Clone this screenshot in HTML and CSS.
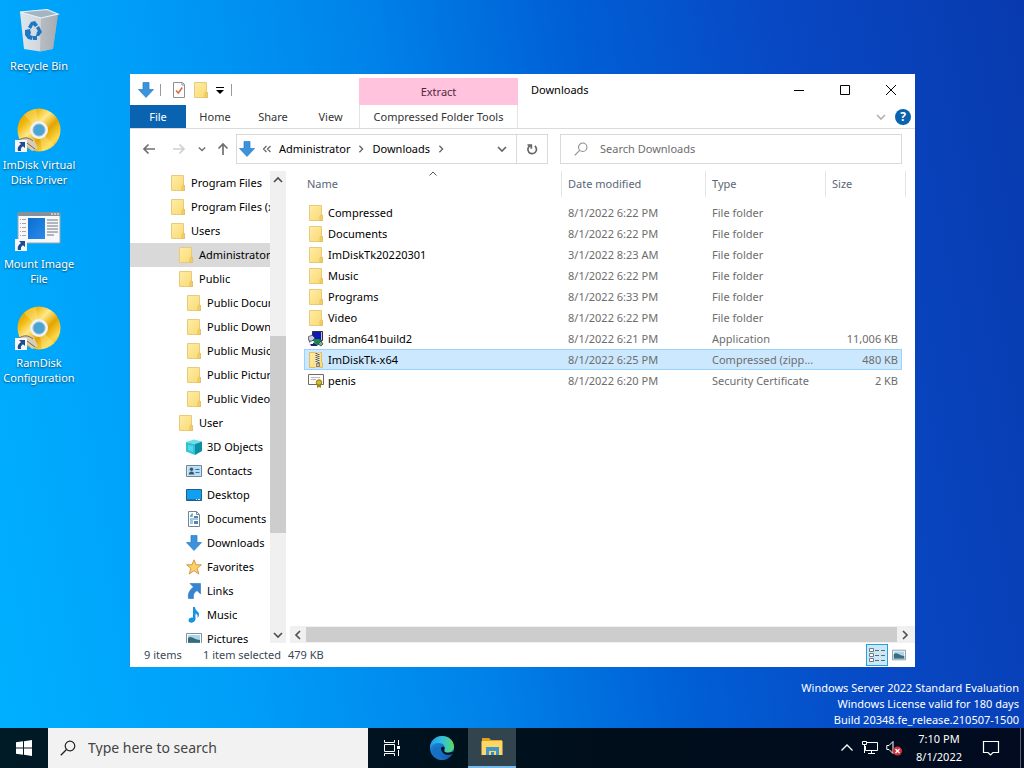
FILE: index.html
```html
<!DOCTYPE html>
<html lang="en">
<head>
<meta charset="utf-8">
<title>Downloads</title>
<meta name="viewport" content="width=device-width, initial-scale=1">
<link rel="stylesheet" href="styles.css">
</head>
<body>
<svg class="defs" aria-hidden="true">
  <defs>
    <linearGradient id="gFolder" x1="0" y1="0" x2="1" y2="1"><stop offset="0" stop-color="#ffeda6"/><stop offset="1" stop-color="#f9d872"/></linearGradient>
    <linearGradient id="gGold" x1="0" y1="0" x2="1" y2="1"><stop offset="0" stop-color="#c98f00"/><stop offset=".25" stop-color="#f2b90e"/><stop offset=".42" stop-color="#ffe98a"/><stop offset=".6" stop-color="#e3a400"/><stop offset=".8" stop-color="#ffd94a"/><stop offset="1" stop-color="#b98300"/></linearGradient>
    <linearGradient id="gBin" x1="0" y1="0" x2="1" y2="0"><stop offset="0" stop-color="#dfe6ec"/><stop offset=".6" stop-color="#cdd4da"/><stop offset="1" stop-color="#a2a7ae"/></linearGradient>
    <linearGradient id="gScreen" x1="0" y1="0" x2="1" y2="1"><stop offset="0" stop-color="#0a6fd0"/><stop offset="1" stop-color="#2b8ae8"/></linearGradient>
    <linearGradient id="gEdgeA" x1="0" y1="0" x2="1" y2="0"><stop offset="0" stop-color="#1f9fe6"/><stop offset=".55" stop-color="#35c1d8"/><stop offset="1" stop-color="#5fd95c"/></linearGradient>
    <linearGradient id="gEdgeB" x1="0" y1="0" x2="1" y2="1"><stop offset="0" stop-color="#1b8fe0"/><stop offset="1" stop-color="#0f56ae"/></linearGradient>
  </defs>
  <symbol id="folder" viewBox="0 0 16 16">
    <path d="M1.5.5h12v9l1 1v5h-13z" fill="url(#gFolder)" stroke="#e8cb78"/>
    <path d="M12 15.5v-4l1.5-2 1 1.500v4.500z" fill="#f4cf63" stroke="#dfbc5c" stroke-width=".7"/>
  </symbol>
  <symbol id="zip" viewBox="0 0 16 16">
    <path d="M1.500.5h12v9l1 1v5h-13z" fill="url(#gFolder)" stroke="#e0bd60"/>
    <path d="M7 .5h5v15H7z" fill="#efe5bd"/>
    <path d="M8.500 1v10M10.500 2v10" stroke="#5c5c54" stroke-width="2" stroke-dasharray="1 1"/>
    <path d="M8 11h4v4H8z" fill="#8b8772"/><path d="M9.500 12h1v2h-1z" fill="#eee"/>
  </symbol>
  <symbol id="down" viewBox="0 0 16 16"><path d="M5 .5h6v7h4.500L8 15.500.5 7.500H5z" fill="#3a93dc" stroke="#2a7cc2" stroke-width=".7"/></symbol>
  <symbol id="cube" viewBox="0 0 16 16"><path d="M0 3 8 .5l8 2L9 5z" fill="#6be0ea"/><path d="M0 3l9 2v11L0 12.500z" fill="#2fc3d4"/><path d="M9 5l7-2.500V12l-7 4z" fill="#0c8ea6"/><path d="M2 6l5 1v6l-5-2z" fill="#58d8e4"/></symbol>
  <symbol id="contacts" viewBox="0 0 16 16"><path d="M.5 2.500h15v11H.5z" fill="#d5ecfa" stroke="#6d8798"/><path d="M2 3.500h12.500v9H2z" fill="#b5dcf5"/><circle cx="5.500" cy="6.200" r="1.700" fill="#3d5468"/><path d="M2.800 11.500c0-4 5.400-4 5.400 0z" fill="#3d5468"/><path d="M9.500 6.500h4M9.500 9.500h4" stroke="#2676b0"/></symbol>
  <symbol id="desktop" viewBox="0 0 16 16"><path d="M.5 2.500h15v11H.5z" fill="#10a0f0" stroke="#235f8c"/><path d="M1 12h14v1H1z" fill="#1874b8"/><path d="M10 12.500h1m1 0h2" stroke="#d5efff"/></symbol>
  <symbol id="document" viewBox="0 0 16 16"><path d="M2.500.5h8l3 3v12h-11z" fill="#fff" stroke="#738697"/><path d="M10.500.5v3h3" fill="none" stroke="#738697"/><path d="M4 5h3M4 8h8M4 10h3M4 12h3" stroke="#3d8fb8"/><path d="M6 2l-2 4 2-1 1-2z" fill="#3fa0a0"/><path d="M8 5h4v2H8zM8 10h4v3H8z" fill="#5682b0"/></symbol>
  <symbol id="star" viewBox="0 0 16 16"><path d="M8 .8l2 5h5.400l-4.300 3.500 1.700 5.700L8 11.700 3.200 15l1.700-5.700L.6 5.800H6z" fill="#ffd06a" stroke="#d39a45"/></symbol>
  <symbol id="links" viewBox="0 0 16 16"><path d="M4 .5h10.500V11L11 7.500c-3 2-4 4-3.500 8H2.500c-1-5 1.500-9 5-11.500z" fill="#3684d2" stroke="#2b73bc" stroke-width=".6"/></symbol>
  <symbol id="music" viewBox="0 0 16 16"><path d="M7 0h2c0 4 4 4 4 7.500 0 1.500-.5 2.500-1.500 3.500.5-3-.5-4-2-4.500V12c0 4-7 5-7 1.500C2.500 11 5 10 7 10.500z" fill="#1a93df"/></symbol>
  <symbol id="picture" viewBox="0 0 16 16"><path d="M.5 2.500h15v11H.5z" fill="#fff" stroke="#82919b"/><path d="M2 4h12v8H2z" fill="#a8d7ed"/><path d="M2 7c4-3 6 2 12 2v3H2z" fill="#3a6a75"/><path d="M2 11h12v1H2z" fill="#3f80af"/></symbol>
  <symbol id="installer" viewBox="0 0 16 16"><path d="M4.500.5h10v9h-10z" fill="#1018b8" stroke="#333"/><path d="M13.500 1v8" stroke="#bcbccc"/><path d="M0 6l4-2 3 3-3 3H1z" fill="#c8cbe8" stroke="#333" stroke-width=".7"/><path d="M5 8h6l3 2v3l-3 1H7z" fill="#158a4c"/><path d="M1 10l5 2 4 3H3z" fill="#20206c"/><path d="M2 11h3v2H2z" fill="#fff"/><path d="M10 13l3-3 2 3-2 2z" fill="#80b090" stroke="#333" stroke-width=".7"/></symbol>
  <symbol id="cert" viewBox="0 0 16 16"><path d="M.5 1.500h15v10H.5z" fill="#fffdf3" stroke="#6c6c63"/><path d="M3 4.500h9M3 6.500h5" stroke="#b9b9d5"/><path d="M9 10h4v5l-2-1-2 1z" fill="#a88b15"/><circle cx="11" cy="9.500" r="2.700" fill="#d6bb32" stroke="#8b7616"/></symbol>
  <symbol id="details" viewBox="0 0 16 16"><path d="M.5 1.500h4v3h-4zM.5 6.500h4v3h-4zM.5 11.500h4v3h-4z" fill="#fff" stroke="#6d7b85"/><path d="M6 3.500h4m2 0h4M6 8.500h4m2 0h4M6 13.500h4m2 0h4" stroke="#5b6b76"/></symbol>
  <symbol id="check" viewBox="0 0 16 16"><path d="M2.500.5h9l2 2v13h-11z" fill="#fff" stroke="#8f8f8f"/><path d="M11 .5v2.500h2.500" fill="none" stroke="#8f8f8f"/><path d="M5 8.500l2.300 2.500 4-5.500" fill="none" stroke="#e06a45" stroke-width="1.600"/></symbol>
  <symbol id="chevDown" viewBox="0 0 10 10"><path d="M1 3l4 4 4-4" fill="none" stroke="currentColor" stroke-width="1.700"/></symbol>
  <symbol id="chevUp" viewBox="0 0 10 10"><path d="M1 7l4-4 4 4" fill="none" stroke="currentColor" stroke-width="1.700"/></symbol>
  <symbol id="chevRight" viewBox="0 0 10 10"><path d="M3 1l4 4-4 4" fill="none" stroke="currentColor" stroke-width="1.700"/></symbol>
  <symbol id="chevLeft" viewBox="0 0 10 10"><path d="M7 1L3 5l4 4" fill="none" stroke="currentColor" stroke-width="1.700"/></symbol>
  <symbol id="dblLeft" viewBox="0 0 10 10"><path d="M4.500 2l-3 3 3 3M8.500 2l-3 3 3 3" fill="none" stroke="currentColor" stroke-width="1.200"/></symbol>
  <symbol id="arrowLeft" viewBox="0 0 14 14"><path d="M13 7H2M6.500 2.500L2 7l4.500 4.500" fill="none" stroke="currentColor" stroke-width="1.700"/></symbol>
  <symbol id="arrowRight" viewBox="0 0 14 14"><path d="M1 7h11M7.500 2.500L12 7l-4.500 4.500" fill="none" stroke="currentColor" stroke-width="1.700"/></symbol>
  <symbol id="arrowUp" viewBox="0 0 14 14"><path d="M7 13V2M2.500 6.500L7 2l4.500 4.500" fill="none" stroke="currentColor" stroke-width="1.700"/></symbol>
  <symbol id="refresh" viewBox="0 0 14 14"><path d="M9.800 4A4.300 4.300 0 1 1 5.200 3.600M2.500 3h3.800v3.800" fill="none" stroke="currentColor" stroke-width="1.700"/></symbol>
  <symbol id="lens" viewBox="0 0 16 16"><circle cx="10" cy="6" r="4.800" fill="none" stroke="currentColor" stroke-width="1.200"/><path d="M6.500 9.500L.8 15.200" stroke="currentColor" stroke-width="1.300"/></symbol>
  <symbol id="shortcut" viewBox="0 0 12 12"><path d="M0 0h12v12H0z" fill="#f4f6f9"/><path d="M4 2h6v6L8 6.200C6 7.500 5.600 8.500 6 11H3C2 8 3.500 5.800 6 4z" fill="#1e4c91"/></symbol>
  <symbol id="disc" viewBox="0 0 48 48">
    <circle cx="24" cy="24" r="21.500" fill="url(#gGold)"/>
    <path d="M24 24L9 9a21 21 0 0 1 12-6zM24 24l15 15a21 21 0 0 1-12 6z" fill="#fff2a0" opacity=".35"/>
    <circle cx="24" cy="24" r="9" fill="#eef3f5"/><circle cx="24" cy="24" r="6" fill="#4aa5d4" stroke="#9bb8c8"/>
    <path d="M2 36c3-5 12-6 17-2l4 8-6 3-5-5H3z" fill="#d8cdb6"/><path d="M4 34c5-3 9-3 14 1M12 37l8 6" stroke="#7b6a4b" fill="none"/>
    <use href="#shortcut" x="0" y="34" width="12" height="12"/>
  </symbol>
</svg>

<main class="desktop">
  <nav class="shortcuts" aria-label="Desktop">
    <a class="shortcut" href="#">
      <svg class="shortcut-icon" viewBox="0 0 48 48"><path d="M5 5L33 2.500 43 7 38 42 25 44.500 9 42z" fill="url(#gBin)"/><path d="M26 11l17-4-5 35-13 2.500z" fill="#a9adb3" opacity=".65"/><path d="M5 5l27-2.500L43 7l-17 4z" fill="#a4b5c2" stroke="#e9f1f6" stroke-width="1.200"/><g fill="#1d77c7"><path d="M13 20l3-5 4-1 3 4-3 2-2-2-2 4z"/><path d="M24 19l3 6-3 4h-3l1-4 1-1-2-3z"/><path d="M10 23l5-1 1 4-1 2 3 1-1 4-4-1-3-4z"/><path d="M18 29l4 0v4h-4z"/></g></svg>
      <span>Recycle Bin</span>
    </a>
    <a class="shortcut" href="#">
      <svg class="shortcut-icon"><use href="#disc"/></svg>
      <span>ImDisk Virtual Disk Driver</span>
    </a>
    <a class="shortcut" href="#">
      <svg class="shortcut-icon" viewBox="0 0 48 48"><path d="M3 8h42v30H3z" fill="#f6f7f8" stroke="#9aa6ae"/><path d="M3 7h42v4H3z" fill="#84909a"/><path d="M36 9h2m1 0h2m1 0h2" stroke="#fff"/><path d="M13 13h17v21H13z" fill="url(#gScreen)"/><path d="M5 14.500h6M5 18.500h6M5 22.500h6M5 26.500h6M5 30.500h6" stroke="#b59f9f" stroke-dasharray="1 1 4 1"/><path d="M32 15h11M32 18h11M32 21h11M32 24h11M32 27h11M32 30h7" stroke="#6d7780"/><use href="#shortcut" x="0" y="34" width="12" height="12"/></svg>
      <span>Mount Image File</span>
    </a>
    <a class="shortcut" href="#">
      <svg class="shortcut-icon"><use href="#disc"/></svg>
      <span>RamDisk Configuration</span>
    </a>
  </nav>

  <section class="window" aria-label="Downloads">
    <header class="titlebar">
      <div class="quick">
        <svg class="i16"><use href="#down"/></svg>
        <i class="sep first"></i>
        <button class="plain" aria-label="Properties"><svg class="i16"><use href="#check"/></svg></button>
        <button class="plain" aria-label="New folder"><svg class="i16"><use href="#folder"/></svg></button>
        <button class="plain" aria-label="Customize toolbar"><svg class="i10" viewBox="0 0 10 10"><path d="M1 2.500h8" stroke="#000"/><path d="M1 5h8L5 9z"/></svg></button>
        <i class="sep"></i>
      </div>
      <div class="context-tab">Extract</div>
      <h1 class="title">Downloads</h1>
      <div class="controls">
        <button class="control" aria-label="Minimize"><svg class="i10" viewBox="0 0 10 10"><path d="M0 5.500h10" stroke="#000"/></svg></button>
        <button class="control" aria-label="Maximize"><svg class="i10" viewBox="0 0 10 10"><path d="M.5.5h9v9h-9z" fill="none" stroke="#000"/></svg></button>
        <button class="control" aria-label="Close"><svg class="i10" viewBox="0 0 10 10"><path d="M0 0l10 10M10 0L0 10" stroke="#000"/></svg></button>
      </div>
    </header>
    <div class="ribbon">
      <button class="tab file">File</button>
      <button class="tab">Home</button>
      <button class="tab">Share</button>
      <button class="tab view">View</button>
      <button class="tab tools">Compressed Folder Tools</button>
      <div class="ribbon-end">
        <button class="plain pale" aria-label="Expand ribbon"><svg class="i10"><use href="#chevDown"/></svg></button>
        <button class="help" aria-label="Help">?</button>
      </div>
    </div>
    <div class="address-row">
      <div class="history">
        <button class="plain" aria-label="Back"><svg class="i14"><use href="#arrowLeft"/></svg></button>
        <button class="plain faint" aria-label="Forward"><svg class="i14"><use href="#arrowRight"/></svg></button>
        <button class="plain" aria-label="Recent"><svg class="i8"><use href="#chevDown"/></svg></button>
        <button class="plain" aria-label="Up"><svg class="i14"><use href="#arrowUp"/></svg></button>
      </div>
      <div class="address">
        <svg class="i16"><use href="#down"/></svg>
        <svg class="i10"><use href="#dblLeft"/></svg>
        <button class="crumb">Administrator</button>
        <svg class="i8"><use href="#chevRight"/></svg>
        <button class="crumb">Downloads</button>
        <svg class="i8"><use href="#chevRight"/></svg>
        <button class="plain previous" aria-label="Previous locations"><svg class="i10"><use href="#chevDown"/></svg></button>
        <button class="refresh" aria-label="Refresh"><svg class="i14"><use href="#refresh"/></svg></button>
      </div>
      <label class="search">
        <svg class="i14"><use href="#lens"/></svg>
        <input type="text" placeholder="Search Downloads" aria-label="Search Downloads">
      </label>
    </div>
    <div class="body">
      <nav class="tree" aria-label="Folders">
        <a class="node" href="#"><svg class="i16"><use href="#folder"/></svg>Program Files</a>
        <a class="node" href="#"><svg class="i16"><use href="#folder"/></svg>Program Files (x86)</a>
        <a class="node" href="#"><svg class="i16"><use href="#folder"/></svg>Users</a>
        <a class="node l1 current" href="#"><svg class="i16"><use href="#folder"/></svg>Administrator</a>
        <a class="node l1" href="#"><svg class="i16"><use href="#folder"/></svg>Public</a>
        <a class="node l2" href="#"><svg class="i16"><use href="#folder"/></svg>Public Documents</a>
        <a class="node l2" href="#"><svg class="i16"><use href="#folder"/></svg>Public Downloads</a>
        <a class="node l2" href="#"><svg class="i16"><use href="#folder"/></svg>Public Music</a>
        <a class="node l2" href="#"><svg class="i16"><use href="#folder"/></svg>Public Pictures</a>
        <a class="node l2" href="#"><svg class="i16"><use href="#folder"/></svg>Public Videos</a>
        <a class="node l1" href="#"><svg class="i16"><use href="#folder"/></svg>User</a>
        <a class="node l2" href="#"><svg class="i16"><use href="#cube"/></svg>3D Objects</a>
        <a class="node l2" href="#"><svg class="i16"><use href="#contacts"/></svg>Contacts</a>
        <a class="node l2" href="#"><svg class="i16"><use href="#desktop"/></svg>Desktop</a>
        <a class="node l2" href="#"><svg class="i16"><use href="#document"/></svg>Documents</a>
        <a class="node l2" href="#"><svg class="i16"><use href="#down"/></svg>Downloads</a>
        <a class="node l2" href="#"><svg class="i16"><use href="#star"/></svg>Favorites</a>
        <a class="node l2" href="#"><svg class="i16"><use href="#links"/></svg>Links</a>
        <a class="node l2" href="#"><svg class="i16"><use href="#music"/></svg>Music</a>
        <a class="node l2" href="#"><svg class="i16"><use href="#picture"/></svg>Pictures</a>
      </nav>
      <div class="vbar">
        <button class="bar-button" aria-label="Scroll up"><svg class="i10"><use href="#chevUp"/></svg></button>
        <div class="vtrack"><div class="vthumb"></div></div>
        <button class="bar-button" aria-label="Scroll down"><svg class="i10"><use href="#chevDown"/></svg></button>
      </div>
      <div class="files">
        <table class="list">
          <colgroup><col><col class="c-date"><col class="c-type"><col class="c-size"><col class="c-end"></colgroup>
          <thead><tr><th class="name">Name<svg class="sort" viewBox="0 0 8 5"><path d="M.5 4.500L4 1l3.500 3.500" fill="none" stroke="#555"/></svg></th><th>Date modified</th><th>Type</th><th>Size</th><td class="edge"></td></tr></thead>
          <tbody>
            <tr><td class="name"><svg class="i16"><use href="#folder"/></svg>Compressed</td><td>8/1/2022 6:22 PM</td><td>File folder</td><td class="size"></td></tr>
            <tr><td class="name"><svg class="i16"><use href="#folder"/></svg>Documents</td><td>8/1/2022 6:22 PM</td><td>File folder</td><td class="size"></td></tr>
            <tr><td class="name"><svg class="i16"><use href="#folder"/></svg>ImDiskTk20220301</td><td>3/1/2022 8:23 AM</td><td>File folder</td><td class="size"></td></tr>
            <tr><td class="name"><svg class="i16"><use href="#folder"/></svg>Music</td><td>8/1/2022 6:22 PM</td><td>File folder</td><td class="size"></td></tr>
            <tr><td class="name"><svg class="i16"><use href="#folder"/></svg>Programs</td><td>8/1/2022 6:33 PM</td><td>File folder</td><td class="size"></td></tr>
            <tr><td class="name"><svg class="i16"><use href="#folder"/></svg>Video</td><td>8/1/2022 6:22 PM</td><td>File folder</td><td class="size"></td></tr>
            <tr><td class="name"><svg class="i16"><use href="#installer"/></svg>idman641build2</td><td>8/1/2022 6:21 PM</td><td>Application</td><td class="size">11,006 KB</td></tr>
            <tr class="selected"><td class="name"><svg class="i16"><use href="#zip"/></svg>ImDiskTk-x64</td><td>8/1/2022 6:25 PM</td><td>Compressed (zipp...</td><td class="size">480 KB</td></tr>
            <tr><td class="name"><svg class="i16"><use href="#cert"/></svg>penis</td><td>8/1/2022 6:20 PM</td><td>Security Certificate</td><td class="size">2 KB</td></tr>
          </tbody>
        </table>
        <div class="hbar">
          <button class="bar-button" aria-label="Scroll left"><svg class="i10"><use href="#chevLeft"/></svg></button>
          <div class="hthumb"></div>
          <button class="bar-button" aria-label="Scroll right"><svg class="i10"><use href="#chevRight"/></svg></button>
        </div>
      </div>
    </div>
    <footer class="status">
      <span class="count">9 items</span><span class="chosen">1 item selected</span><span>479 KB</span>
      <div class="views">
        <button class="view-button on" aria-label="Details view"><svg class="i16"><use href="#details"/></svg></button>
        <button class="view-button" aria-label="Thumbnail view"><svg class="i14"><use href="#picture"/></svg></button>
      </div>
    </footer>
  </section>

  <p class="watermark">Windows Server 2022 Standard Evaluation<br>Windows License valid for 180 days<br>Build 20348.fe_release.210507-1500</p>
</main>

<footer class="taskbar">
  <button class="task" aria-label="Start"><svg class="i16" viewBox="0 0 16 16" fill="#fff"><path d="M0 2.300l7-1v6.200H0zM8 1.200L16 0v7.500H8zM0 8.500h7v6.200l-7-1zM8 8.500h8V16l-8-1.200z"/></svg></button>
  <label class="task-search">
    <svg class="i16"><use href="#lens"/></svg>
    <input type="text" placeholder="Type here to search" aria-label="Type here to search">
  </label>
  <button class="task" aria-label="Task view"><svg class="i16" viewBox="0 0 16 16"><path d="M.5 0v2.500h10V0M.5 16v-2.500h10V16M.5 4.500h10v7H.5zM14.500 0v5M14.500 10v6" fill="none" stroke="#fff"/><path d="M13 6h3v3h-3z" fill="#fff"/></svg></button>
  <button class="task" aria-label="Edge"><svg class="i24" viewBox="0 0 24 24"><circle cx="12" cy="12" r="12" fill="url(#gEdgeB)"/><path d="M0 11C1 4 6 0 12 0c7 0 12 5 12 10.500 0 4-3 6-6.500 6-2.500 0-4-1-3-2.500 3-5-7-11-14-3z" fill="url(#gEdgeA)"/><path d="M9 11c-3 5 1 12 8 11.500-7 4-16-1-14.500-8C3 11 6 9.500 9 11z" fill="#1670c4"/><path d="M11 12c1-2 4-1.500 3.500 1-1.500 3 2 5 7.500 3 1-.5 2 .5 1 1.500-4 3-12 1-12-5.500z" fill="#03121a"/></svg></button>
  <button class="task active" aria-label="File Explorer"><svg class="i24" viewBox="0 0 24 24"><path d="M2 3h7l2 2h11v4H2z" fill="#e2a020"/><path d="M1.500 6h21v14h-21z" fill="#ffd564"/><path d="M6 12h13v8h-3v-4H9v4H6z" fill="#3b96cf"/><path d="M9 16h7v4H9z" fill="#ffd564"/><path d="M11 17h3v3h-3z" fill="#3987bd"/></svg></button>
  <div class="tray">
    <button class="plain" aria-label="Hidden icons"><svg class="i14" viewBox="0 0 14 14"><path d="M1.500 9.500L7 4l5.500 5.500" fill="none" stroke="#fff" stroke-width="1.300"/></svg></button>
    <button class="plain" aria-label="Network"><svg class="i16" viewBox="0 0 16 16"><path d="M5 2.500h10.500v8H3.500V6M9.500 10.500v3M6 13.500h7M.5 1.500h4v3h-4zM2.500 5v8" fill="none" stroke="#fff"/></svg></button>
    <button class="plain" aria-label="Volume muted"><svg class="i16" viewBox="0 0 16 16"><path d="M.8 5.500H3l4-4v12l-4-4H.8z" fill="none" stroke="#fff"/><circle cx="11.500" cy="11" r="4.500" fill="#d32f38"/><path d="M9.500 9l4 4m0-4l-4 4" stroke="#fff" stroke-width="1.300"/></svg></button>
    <button class="clock">7:10 PM<br>8/1/2022</button>
    <button class="plain" aria-label="Notifications"><svg class="i18" viewBox="0 0 18 18"><path d="M1.500 2.500h15v11H11L8.500 16 6 13.500H1.500z" fill="none" stroke="#fff" stroke-width="1.200"/></svg></button>
    <i class="peek"></i>
  </div>
</footer>
</body>
</html>
```
FILE: styles.css
```css
* { box-sizing: border-box; }

html, body { height: 100%; margin: 0; }

body {
  display: flex;
  flex-direction: column;
  overflow: hidden;
  font: 11px/16px "Noto Sans", "Open Sans", sans-serif;
  color: #000;
  background: linear-gradient(80deg, #00b0ff 0%, #009ef8 22%, #0084ea 42%, #0060d6 60%, #0848c4 78%, #083aae 100%);
}

button, input { font: inherit; color: inherit; }
button { border: 0; padding: 0; background: none; white-space: nowrap; }
a { color: inherit; text-decoration: none; }
svg { display: block; flex: none; }

.defs { position: absolute; width: 0; height: 0; }
.i8 { width: 8px; height: 8px; }
.i10 { width: 10px; height: 10px; }
.i14 { width: 14px; height: 14px; }
.i16 { width: 16px; height: 16px; }
.i18 { width: 18px; height: 18px; }
.i24 { width: 24px; height: 24px; }
.plain { display: grid; place-items: center; }

.desktop { position: relative; flex: 1; min-height: 0; }

.shortcuts { display: flex; flex-direction: column; width: 78px; padding-top: 7px; }
.shortcut {
  display: flex;
  flex-direction: column;
  align-items: center;
  gap: 3px;
  height: 99px;
  line-height: 15px;
  text-align: center;
  color: #fff;
  text-shadow: 0 1px 2px rgba(0, 0, 0, .6);
}
.shortcut-icon { width: 48px; height: 48px; }

.window {
  position: absolute;
  inset: 74px 109px 61px 129px;
  display: flex;
  flex-direction: column;
  background: #fff;
  border: solid #1597ee;
  border-width: 0 0 0 1px;
}

.titlebar { display: flex; align-items: stretch; height: 31px; }
.quick { display: flex; align-items: center; gap: 6px; width: 229px; padding-left: 8px; }
.sep { width: 1px; height: 12px; background: #9a9a9a; }
.sep.first { margin-right: 4px; }
.context-tab {
  width: 159px;
  margin-top: 4px;
  line-height: 28px;
  text-align: center;
  color: #52283d;
  background: #ffc3de;
}
.title { margin: 0; padding-left: 13px; font-size: 11px; font-weight: 400; line-height: 32px; }
.controls { display: flex; margin-left: auto; padding-right: 1px; }
.control { display: grid; place-items: center; width: 46px; }

.ribbon { display: flex; height: 24px; border-bottom: 1px solid #dadbdc; color: #333; }
.tab { width: 58px; line-height: 23px; }
.tab.file { width: 56px; color: #fff; background: #0a63b1; }
.tab.view { width: 57px; }
.tab.tools { width: 159px; border: solid #e3e3e3; border-width: 0 1px; }
.ribbon-end { display: flex; align-items: center; gap: 9px; margin-left: auto; padding-right: 4px; }
.pale { color: #b3b3b3; }
.help {
  width: 16px;
  height: 16px;
  border-radius: 8px;
  line-height: 16px;
  font-size: 12px;
  font-weight: 700;
  color: #fff;
  background: #0a64ad;
}

.address-row { display: flex; align-items: center; height: 42px; padding-right: 13px; padding-bottom: 2px; }
.history { display: flex; align-items: center; gap: 16px; flex: none; width: 106px; padding-left: 12px; color: #707070; }
.history button:nth-child(n+3) { margin-left: -4px; }
.history button:last-child { margin-left: -6px; }
.faint { color: #cfcfcf; }
.address {
  display: flex;
  align-items: center;
  gap: 7px;
  flex: 1 1 312px;
  height: 30px;
  padding-left: 2px;
  border: 1px solid #d9d9d9;
  color: #666;
}
.crumb { color: #000; }
.previous { margin-left: auto; margin-right: 2px; }
.refresh { display: grid; place-items: center; align-self: stretch; width: 31px; border-left: 1px solid #d9d9d9; }
.search {
  display: flex;
  align-items: center;
  gap: 12px;
  flex: 1 1 342px;
  height: 30px;
  margin-left: 12px;
  padding: 0 13px;
  border: 1px solid #d9d9d9;
  color: #8a8a8a;
}
.search input, .task-search input { flex: 1; min-width: 0; padding: 0; border: 0; outline: 0; background: none; }
.search input::placeholder { color: #6d6d6d; opacity: 1; }

.body { display: flex; flex: 1; min-height: 0; }
.tree { width: 140px; overflow: hidden; }
.node { display: flex; align-items: center; gap: 5px; height: 24px; padding-left: 40px; white-space: nowrap; }
.l1 { padding-left: 48px; }
.l2 { padding-left: 56px; }
.current { background: #d9d9d9; }

.vbar { display: flex; flex-direction: column; width: 16px; margin-right: 4px; background: #f0f0f0; }
.bar-button { display: grid; place-items: center; flex: none; width: 16px; height: 17px; color: #505050; }
.vtrack { flex: 1; padding-top: 148px; }
.vthumb { height: 197px; background: #cdcdcd; }

.files { display: flex; flex-direction: column; justify-content: space-between; flex: 1; min-width: 0; }
.list {
  width: calc(100% - 23px);
  margin-left: 14px;
  table-layout: fixed;
  border-collapse: separate;
  border-spacing: 0;
  color: #6d6d6d;
}
.c-date { width: 144px; }
.c-type { width: 120px; }
.c-size { width: 76px; }
.c-end { width: 4px; }
th {
  height: 26px;
  padding: 0 6px;
  border-right: 1px solid #e5e5e5;
  font-weight: 400;
  text-align: left;
  color: #5a6678;
}
th:nth-child(4) { border-right: 0; }
th.name { position: relative; padding-left: 3px; }
.edge { padding: 0; border-right: 1px solid #e5e5e5; }
.sort { position: absolute; top: 0; left: 50%; width: 8px; height: 5px; margin-left: -4px; }
thead::after { content: ""; display: block; height: 5px; }
tbody td { height: 21px; padding: 0 6px; white-space: nowrap; }
tbody td.name { display: flex; align-items: center; gap: 4px; padding: 0 4px; color: #000; }
tbody td.size { padding: 0 4px; text-align: right; }
.selected td { border: solid #99d1ff; border-width: 1px 0; background: #cce8ff; }
.selected td.name { border-left-width: 1px; padding-left: 3px; }
.selected td.size { border-right-width: 1px; padding-right: 3px; }

.hbar { display: flex; align-items: center; height: 17px; padding-right: 2px; background: #f0f0f0; }
.hthumb { flex: 1; height: 15px; background: #cdcdcd; }

.status { display: flex; align-items: center; height: 24px; padding: 0 5px 0 14px; white-space: nowrap; color: #3c4657; }
.count { width: 59px; }
.chosen { width: 85px; }
.views { display: flex; margin-left: auto; }
.view-button { display: grid; place-items: center; width: 22px; height: 22px; }
.view-button.on { border: 1px solid #26a0da; background: #cce8f6; }

.watermark { position: absolute; right: 5px; bottom: 0; margin: 0; text-align: right; color: #fff; }

.taskbar { display: flex; height: 40px; color: #fff; background: linear-gradient(90deg, #001a26, #000e1b 60%, #020b20); }
.task { display: grid; place-items: center; width: 48px; margin-right: 2px; }
.task:first-child { margin-right: 0; }
.task.active { background: #32454e; border-bottom: 2px solid #76b9ed; }
.task-search {
  display: flex;
  align-items: center;
  gap: 12px;
  flex: 0 1 320px;
  padding: 0 12px;
  font-size: 14px;
  color: #222;
  background: #f2f2f2;
}
.task-search input::placeholder { color: #444; opacity: 1; }
.tray { display: flex; align-items: center; gap: 8px; margin-left: auto; padding-right: 3px; }
.clock { width: 58px; line-height: 18px; text-align: center; }
.tray .clock + .plain { margin: 0 12px 0 6px; }
.peek { width: 1px; height: 40px; background: #5a6470; }
```
